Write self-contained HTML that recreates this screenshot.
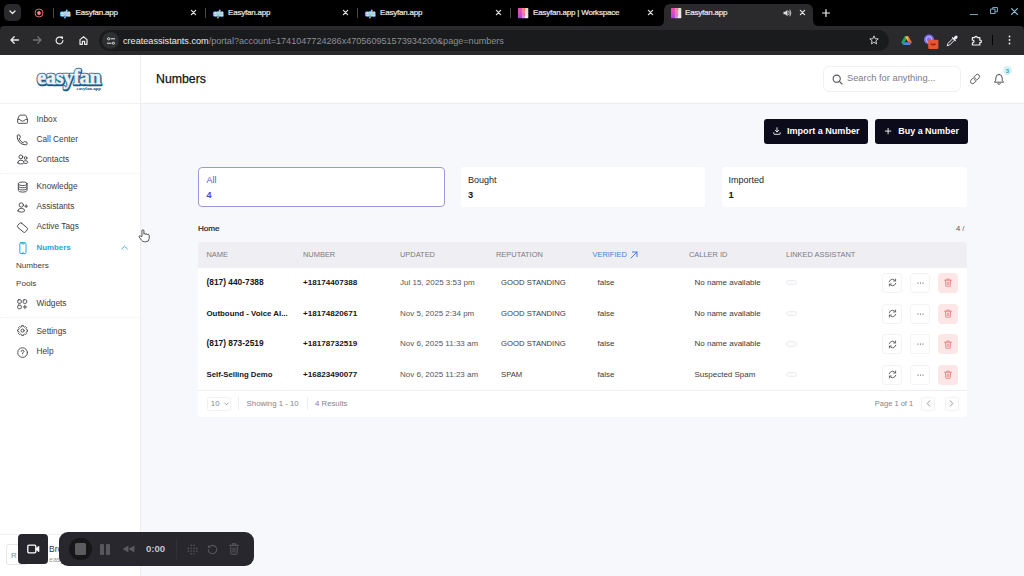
<!DOCTYPE html>
<html><head><meta charset="utf-8"><title>Easyfan.app</title>
<style>
*{box-sizing:border-box;margin:0;padding:0}
html,body{width:1024px;height:576px;overflow:hidden;background:#f7f8fc;font-family:"Liberation Sans",sans-serif;}
body{position:relative}
svg{position:absolute;overflow:visible}
.t{position:absolute;white-space:nowrap;transform:translateY(-50%)}
#tabs{position:absolute;left:0;top:0;width:1024px;height:34px;background:#000}
#toolbar{position:absolute;left:0;top:26px;width:1024px;height:29px;background:#2a2a2d;border-radius:4px 4px 0 0}
#acttab{position:absolute;left:664px;top:4px;width:149px;height:23px;background:#2a2a2d;border-radius:6px 6px 0 0}
#url{position:absolute;left:99px;top:30px;width:790px;height:21px;border-radius:11px;background:#1a1b1d}
.tabt{font-size:8px;color:#ececec;top:11.7px;letter-spacing:-0.2px;-webkit-text-stroke:0.2px #ececec}
.sep{position:absolute;top:8px;width:1px;height:10px;background:#4a4a4a}
#side{position:absolute;left:0;top:55px;width:141px;height:521px;background:#fff;border-right:1px solid #ececf1}
.nav{font-size:8.3px;color:#3c3c43;left:36px}
.dv{position:absolute;left:0;width:140px;height:0;border-top:1px dotted #efeff4}
#head{position:absolute;left:141px;top:55px;width:883px;height:48.5px;background:#fff;border-bottom:1px solid #ececf1}
.card{position:absolute;top:167px;height:40px;background:#fff;border-radius:3px}
.btn{position:absolute;top:119px;height:25px;background:#0b0b1c;border-radius:3px}
.btn .t{color:#fff;font-weight:bold;font-size:9px;top:11.8px}
#tbl{position:absolute;left:198px;top:242px;width:769px;height:174.6px;background:#fff;border-radius:3px;overflow:hidden}
#thead{position:absolute;left:0;top:0;width:100%;height:25.5px;background:#efeff3}
.th{font-size:7.45px;color:#7a7a85;top:11.6px}
.row{position:absolute;left:0;width:100%;height:31px}
.c{font-size:8px;color:#3a3a40;top:14.7px}
.c.b{font-weight:bold;color:#15151a;font-size:8.1px}
.ab{position:absolute;top:5.5px;width:20px;height:20px;border:1px solid #f2f2f7;border-radius:3.5px;background:#fff}
.ab.del{background:#fde6e6;border-color:#fde6e6}
.ft{font-size:7.8px;color:#85858d;top:160.5px}
</style></head><body>

<div id="tabs"></div><div id="acttab"></div><div id="toolbar"></div><div id="url"></div>
<svg style="left:658px;top:20px" width="6" height="6" viewBox="0 0 6 6"><path d="M6 0 V6 H0 Q6 6 6 0 Z" fill="#2a2a2d"/></svg>
<svg style="left:813px;top:20px" width="6" height="6" viewBox="0 0 6 6"><path d="M0 0 V6 H6 Q0 6 0 0 Z" fill="#2a2a2d"/></svg>
<div style="position:absolute;left:4px;top:4px;width:17px;height:17px;border-radius:5px;background:#2a2a2c"></div>
<svg style="left:9px;top:10px" width="7" height="5" viewBox="0 0 7 5"><path d="M1 1 L3.5 3.5 L6 1" fill="none" stroke="#e8e8e8" stroke-width="1.3" stroke-linecap="round" stroke-linejoin="round"/></svg>
<svg style="left:34px;top:8px" width="10" height="10" viewBox="0 0 10 10"><circle cx="5" cy="5" r="4" fill="none" stroke="#e06a66" stroke-width="1"/><circle cx="5" cy="5" r="1.9" fill="#f08a86"/></svg>
<div class="sep" style="left:53px"></div>
<svg style="left:60px;top:7.5px" width="11" height="11" viewBox="0 0 11 11"><g transform="translate(0.5 7.6) scale(1 2.6)" font-family="'Liberation Serif',serif" font-weight="bold" font-size="3px"><text x="0" y="0" fill="#5f9cc4" stroke="#5f9cc4" stroke-width="0.55" stroke-linejoin="round">easyfan</text><text x="0" y="0" fill="#e4f0f8" stroke="#cfe4f2" stroke-width="0.12">easyfan</text></g></svg>
<div class="t tabt" style="left:75.5px">Easyfan.app</div>
<svg style="left:190.5px;top:10.0px" width="5" height="5" viewBox="0 0 5 5"><path d="M0.4 0.4 L4.6 4.6 M4.6 0.4 L0.4 4.6" stroke="#e3e3e3" stroke-width="1.25" stroke-linecap="round"/></svg>
<div class="sep" style="left:205px"></div>
<svg style="left:213px;top:7.5px" width="11" height="11" viewBox="0 0 11 11"><g transform="translate(0.5 7.6) scale(1 2.6)" font-family="'Liberation Serif',serif" font-weight="bold" font-size="3px"><text x="0" y="0" fill="#5f9cc4" stroke="#5f9cc4" stroke-width="0.55" stroke-linejoin="round">easyfan</text><text x="0" y="0" fill="#e4f0f8" stroke="#cfe4f2" stroke-width="0.12">easyfan</text></g></svg>
<div class="t tabt" style="left:228px">Easyfan.app</div>
<svg style="left:342.5px;top:10.0px" width="5" height="5" viewBox="0 0 5 5"><path d="M0.4 0.4 L4.6 4.6 M4.6 0.4 L0.4 4.6" stroke="#e3e3e3" stroke-width="1.25" stroke-linecap="round"/></svg>
<div class="sep" style="left:357px"></div>
<svg style="left:365px;top:7.5px" width="11" height="11" viewBox="0 0 11 11"><g transform="translate(0.5 7.6) scale(1 2.6)" font-family="'Liberation Serif',serif" font-weight="bold" font-size="3px"><text x="0" y="0" fill="#5f9cc4" stroke="#5f9cc4" stroke-width="0.55" stroke-linejoin="round">easyfan</text><text x="0" y="0" fill="#e4f0f8" stroke="#cfe4f2" stroke-width="0.12">easyfan</text></g></svg>
<div class="t tabt" style="left:380px">Easyfan.app</div>
<svg style="left:495.5px;top:10.0px" width="5" height="5" viewBox="0 0 5 5"><path d="M0.4 0.4 L4.6 4.6 M4.6 0.4 L0.4 4.6" stroke="#e3e3e3" stroke-width="1.25" stroke-linecap="round"/></svg>
<div class="sep" style="left:510px"></div>
<svg style="left:517.5px;top:7.7px" width="10.3" height="10.3" viewBox="0 0 9 9"><defs><linearGradient id="ga517" x1="0" y1="0" x2="0" y2="1"><stop offset="0" stop-color="#f24eb2"/><stop offset="0.5" stop-color="#d94ac8"/><stop offset="1" stop-color="#a844dc"/></linearGradient><linearGradient id="gb517" x1="0" y1="0" x2="0" y2="1"><stop offset="0" stop-color="#f28a92"/><stop offset="0.6" stop-color="#e878b8"/><stop offset="1" stop-color="#c89ae8"/></linearGradient><linearGradient id="gc517" x1="0" y1="0" x2="0" y2="1"><stop offset="0" stop-color="#d4e6d4"/><stop offset="0.5" stop-color="#f6d8dc"/><stop offset="1" stop-color="#e8eefc"/></linearGradient></defs><rect x="0" y="0" width="3.6" height="9" rx="0.6" fill="url(#ga517)"/><rect x="3.4" y="0" width="2.8" height="9" fill="url(#gb517)"/><rect x="6" y="0" width="3" height="9" rx="0.6" fill="url(#gc517)"/><rect x="5.4" y="0.8" width="1" height="1" fill="#f0603a"/><rect x="5.2" y="5.6" width="1" height="1" fill="#f06a5a"/></svg>
<div class="t tabt" style="left:533px">Easyfan.app | Workspace</div>
<svg style="left:647.5px;top:10.0px" width="5" height="5" viewBox="0 0 5 5"><path d="M0.4 0.4 L4.6 4.6 M4.6 0.4 L0.4 4.6" stroke="#e3e3e3" stroke-width="1.25" stroke-linecap="round"/></svg>
<svg style="left:670.5px;top:7.7px" width="10.3" height="10.3" viewBox="0 0 9 9"><defs><linearGradient id="ga670" x1="0" y1="0" x2="0" y2="1"><stop offset="0" stop-color="#f24eb2"/><stop offset="0.5" stop-color="#d94ac8"/><stop offset="1" stop-color="#a844dc"/></linearGradient><linearGradient id="gb670" x1="0" y1="0" x2="0" y2="1"><stop offset="0" stop-color="#f28a92"/><stop offset="0.6" stop-color="#e878b8"/><stop offset="1" stop-color="#c89ae8"/></linearGradient><linearGradient id="gc670" x1="0" y1="0" x2="0" y2="1"><stop offset="0" stop-color="#d4e6d4"/><stop offset="0.5" stop-color="#f6d8dc"/><stop offset="1" stop-color="#e8eefc"/></linearGradient></defs><rect x="0" y="0" width="3.6" height="9" rx="0.6" fill="url(#ga670)"/><rect x="3.4" y="0" width="2.8" height="9" fill="url(#gb670)"/><rect x="6" y="0" width="3" height="9" rx="0.6" fill="url(#gc670)"/><rect x="5.4" y="0.8" width="1" height="1" fill="#f0603a"/><rect x="5.2" y="5.6" width="1" height="1" fill="#f06a5a"/></svg>
<div class="t tabt" style="left:685px">Easyfan.app</div>
<svg style="left:783px;top:8.5px" width="9" height="8" viewBox="0 0 9 8"><path d="M0.5 2.8 H2.2 L4.5 0.8 V7.2 L2.2 5.2 H0.5 Z" fill="#dcdcdc"/><path d="M5.8 2.3 Q7 4 5.8 5.7 M7 1 Q9 4 7 7" fill="none" stroke="#dcdcdc" stroke-width="0.9" stroke-linecap="round"/></svg>
<svg style="left:799.5px;top:10.0px" width="5" height="5" viewBox="0 0 5 5"><path d="M0.4 0.4 L4.6 4.6 M4.6 0.4 L0.4 4.6" stroke="#e3e3e3" stroke-width="1.25" stroke-linecap="round"/></svg>
<svg style="left:821.5px;top:8.5px" width="8" height="8" viewBox="0 0 8 8"><path d="M4 0.5 V7.5 M0.5 4 H7.5" stroke="#f0f0f0" stroke-width="1.2" stroke-linecap="round"/></svg>
<div style="position:absolute;left:969.5px;top:13.5px;width:8px;height:1.2px;background:#7aa0b8"></div>
<svg style="left:989.5px;top:7px" width="8" height="7" viewBox="0 0 9 8"><rect x="0.6" y="2.4" width="5" height="5" fill="none" stroke="#7fb0cc" stroke-width="1.1"/><path d="M3 2.4 V0.6 H8.4 V5.4 H5.6" fill="none" stroke="#7fb0cc" stroke-width="1.1"/></svg>
<svg style="left:1010.5px;top:7.5px" width="7" height="7" viewBox="0 0 7 7"><path d="M0.6 0.6 L6.4 6.4 M6.4 0.6 L0.6 6.4" stroke="#8fc4e0" stroke-width="1.2" stroke-linecap="round"/></svg>
<svg style="left:9.5px;top:36px" width="9" height="8" viewBox="0 0 9 8"><path d="M8.5 4 H1.2 M4.2 0.8 L1 4 L4.2 7.2" fill="none" stroke="#ececec" stroke-width="1.3" stroke-linecap="round" stroke-linejoin="round"/></svg>
<svg style="left:32.5px;top:36px" width="9" height="8" viewBox="0 0 9 8"><path d="M0.5 4 H7.8 M4.8 0.8 L8 4 L4.8 7.2" fill="none" stroke="#707174" stroke-width="1.3" stroke-linecap="round" stroke-linejoin="round"/></svg>
<svg style="left:55px;top:35.5px" width="9" height="9" viewBox="0 0 9 9"><path d="M7.9 4.5 A3.4 3.4 0 1 1 6.6 1.8" fill="none" stroke="#ececec" stroke-width="1.2" stroke-linecap="round"/><path d="M5.2 0.6 H8 V3.4 Z" fill="#ececec"/></svg>
<svg style="left:78.5px;top:35.5px" width="9" height="9" viewBox="0 0 9 9"><path d="M1 8.3 V3.6 L4.5 0.8 L8 3.6 V8.3 H5.6 V5.3 H3.4 V8.3 Z" fill="none" stroke="#ececec" stroke-width="1.2" stroke-linejoin="round"/></svg>
<div style="position:absolute;left:102px;top:32px;width:17px;height:17px;border-radius:50%;background:#2e2f31"></div>
<svg style="left:106.5px;top:36.5px" width="8" height="8" viewBox="0 0 8 8"><circle cx="1.6" cy="1.8" r="1.1" fill="none" stroke="#e8e8e8" stroke-width="0.9"/><path d="M4 1.8 H7.6" stroke="#e8e8e8" stroke-width="1" stroke-linecap="round"/><circle cx="6.4" cy="6.2" r="1.1" fill="none" stroke="#e8e8e8" stroke-width="0.9"/><path d="M0.4 6.2 H4" stroke="#e8e8e8" stroke-width="1" stroke-linecap="round"/></svg>
<div class="t" style="left:123px;top:40.5px;font-size:9.15px;color:#ededed">createassistants.com<span style="color:#8e9093;letter-spacing:-0.027px">/portal?account=1741047724286x470560951573934200&amp;page=numbers</span></div>
<svg style="left:869px;top:35px" width="10" height="10" viewBox="0 0 10 10"><path d="M5 0.9 L6.2 3.7 L9.2 3.9 L6.9 5.9 L7.6 8.9 L5 7.3 L2.4 8.9 L3.1 5.9 L0.8 3.9 L3.8 3.7 Z" fill="none" stroke="#e0e0e0" stroke-width="0.9" stroke-linejoin="round"/></svg>
<svg style="left:901px;top:35.5px" width="11" height="9" viewBox="0 0 11 9"><path d="M3.8 0.3 L0.3 6.3 L2 9 L5.5 3 Z" fill="#21a565"/><path d="M3.8 0.3 H7.2 L10.7 6.3 H7.3 Z" fill="#f6c343"/><path d="M2 9 H9 L10.7 6.3 H3.6 Z" fill="#4a86e8"/><path d="M7.2 0.3 L10.7 6.3 L9 9 L7.3 6.3 Z" fill="#e54b3c" opacity=".8"/></svg>
<svg style="left:923px;top:34px" width="16" height="15" viewBox="0 0 16 15"><circle cx="6" cy="5.5" r="5" fill="#7a6cf0"/><circle cx="6" cy="5.5" r="2.8" fill="none" stroke="#c9c2ff" stroke-width="1"/><rect x="5.2" y="5.8" width="10.2" height="9.2" rx="1.2" fill="#ea5533"/><path d="M7.5 10.4 H13 M8.4 9 L10 11.8 M12 9 L10.6 11.8" stroke="#8a2410" stroke-width="0.8"/></svg>
<svg style="left:946px;top:34.5px" width="12" height="12" viewBox="0 0 12 12"><path d="M1.2 10.8 L2 8.4 L7 3.4 L8.6 5 L3.6 10 Z" fill="none" stroke="#f0f0ff" stroke-width="1" stroke-linejoin="round"/><path d="M6.4 2.6 L9.4 5.6 M7.6 3.8 L9.2 1.6 Q10.2 0.8 10.9 1.5 Q11.4 2.2 10.6 3 L8.4 4.6" fill="#f0f0ff" stroke="#f0f0ff" stroke-width="1.1" stroke-linecap="round"/></svg>
<svg style="left:970.5px;top:35px" width="11" height="11" viewBox="0 0 11 11"><path d="M1.4 2.6 H3.8 Q3.8 1.4 5 1.4 Q6.2 1.4 6.2 2.6 H8.8 V5.2 Q10.4 5 10.4 6.4 Q10.4 7.8 8.8 7.6 V10 H1.4 V7.8 Q3 7.8 3 6.4 Q3 5 1.4 5.2 Z" fill="none" stroke="#efefef" stroke-width="1.2" stroke-linejoin="round"/></svg>
<div style="position:absolute;left:992px;top:35px;width:1px;height:10px;background:#050505"></div>
<svg style="left:1008px;top:35px" width="3" height="10" viewBox="0 0 3 10"><circle cx="1.5" cy="1.5" r="0.9" fill="#ececec"/><circle cx="1.5" cy="5" r="0.9" fill="#ececec"/><circle cx="1.5" cy="8.5" r="0.9" fill="#ececec"/></svg><div id="side"></div><div id="head"></div><div style="position:absolute;left:0;top:102.5px;width:141px;height:1px;background:#f2f2f6"></div>
<svg style="left:34px;top:64.8px" width="74" height="30" viewBox="0 0 74 30">
<g font-family="'Liberation Serif',serif" font-weight="bold" font-size="20.5" letter-spacing="-0.36">
<text x="3.6" y="20.4" fill="#1b4f78" stroke="#1b4f78" stroke-width="2.6" stroke-linejoin="round">easyfan</text>
<text x="3" y="19.3" fill="#2a6c98" stroke="#2e74a2" stroke-width="2.4" stroke-linejoin="round">easyfan</text>
<text x="3" y="19.3" fill="#eef2f5" stroke="#eef2f5" stroke-width="0.5">easyfan</text>
</g>
<text x="42.5" y="24.8" font-family="'Liberation Serif',serif" font-weight="bold" font-size="4.8" fill="#2b4a66">easyfan.app</text>
</svg>
<svg style="left:16.5px;top:113.8px" width="11.2" height="11.2" viewBox="0 0 12 12"><path d="M0.8 5.6 L2.4 1.7 Q2.6 1.2 3.2 1.2 H8.8 Q9.4 1.2 9.6 1.7 L11.2 5.6 V9.2 Q11.2 10 10.4 10 H1.6 Q0.8 10 0.8 9.2 Z M0.8 5.8 H3.2 Q3.6 7.6 6 7.6 Q8.4 7.6 8.8 5.8 H11.2" fill="none" stroke="#48484f" stroke-width="1" stroke-linecap="round" stroke-linejoin="round"/></svg>
<div class="t nav" style="left:36.5px;top:119.2px;">Inbox</div>
<svg style="left:15.6px;top:133.5px" width="12" height="12" viewBox="0 0 12 12"><path d="M1.2 1.6 Q1.2 0.9 1.9 0.9 H3.2 Q3.7 0.9 3.8 1.4 L4.3 3.4 Q4.4 3.8 4 4.1 L3.1 4.8 Q4.3 7.4 7.1 8.8 L7.8 7.9 Q8.1 7.5 8.6 7.6 L10.6 8.1 Q11.1 8.2 11.1 8.8 V10 Q11.1 10.8 10.3 10.8 H9.6 Q5.6 10.8 3.2 8 Q1.2 5.6 1.2 2.4 Z" fill="none" stroke="#48484f" stroke-width="1" stroke-linecap="round" stroke-linejoin="round"/></svg>
<div class="t nav" style="left:36.5px;top:138.6px;">Call Center</div>
<svg style="left:16.5px;top:154.2px" width="11.5" height="11.5" viewBox="0 0 12 12"><circle cx="4" cy="3" r="2" fill="none" stroke="#48484f" stroke-width="1" stroke-linecap="round" stroke-linejoin="round"/><path d="M0.8 9.2 Q0.8 6.4 4 6.4 Q7.2 6.4 7.2 9.2 Q7.2 10.4 4 10.4 Q0.8 10.4 0.8 9.2 Z" fill="none" stroke="#48484f" stroke-width="1" stroke-linecap="round" stroke-linejoin="round"/><circle cx="9" cy="4.2" r="1.4" fill="none" stroke="#48484f" stroke-width="1" stroke-linecap="round" stroke-linejoin="round"/><path d="M8 9.9 Q11.2 10.2 11.2 8.8 Q11.2 7 9 7 Q8.2 7 7.6 7.3" fill="none" stroke="#48484f" stroke-width="1" stroke-linecap="round" stroke-linejoin="round"/></svg>
<div class="t nav" style="left:36.5px;top:158.9px;">Contacts</div>
<div class="dv" style="top:173px"></div>
<svg style="left:16.7px;top:181px" width="11.4" height="12" viewBox="0 0 12 12"><ellipse cx="6" cy="2.6" rx="4.6" ry="1.9" fill="none" stroke="#48484f" stroke-width="1" stroke-linecap="round" stroke-linejoin="round"/><path d="M1.4 2.6 V9.6 Q1.4 11.4 6 11.4 Q10.6 11.4 10.6 9.6 V2.6 M1.4 5 Q1.4 6.8 6 6.8 Q10.6 6.8 10.6 5 M1.4 7.3 Q1.4 9.1 6 9.1 Q10.6 9.1 10.6 7.3" fill="none" stroke="#48484f" stroke-width="1" stroke-linecap="round" stroke-linejoin="round"/></svg>
<div class="t nav" style="left:36.5px;top:185.9px;">Knowledge</div>
<svg style="left:16.5px;top:201.8px" width="11.2" height="11.2" viewBox="0 0 12 12"><circle cx="4.6" cy="3.2" r="2.3" fill="none" stroke="#48484f" stroke-width="1" stroke-linecap="round" stroke-linejoin="round"/><path d="M1 9.6 Q1 6.8 4.6 6.8 Q8.2 6.8 8.2 9.6 Q8.2 10.8 4.6 10.8 Q1 10.8 1 9.6 Z" fill="none" stroke="#48484f" stroke-width="1" stroke-linecap="round" stroke-linejoin="round"/><path d="M9.8 3 V6 M8.3 4.5 H11.3" fill="none" stroke="#48484f" stroke-width="1" stroke-linecap="round" stroke-linejoin="round"/></svg>
<div class="t nav" style="left:36.5px;top:205.7px;">Assistants</div>
<svg style="left:16.8px;top:222px" width="11" height="11" viewBox="0 0 12 12"><g transform="rotate(40 6 6)"><rect x="0.6" y="3" width="11" height="6.2" rx="1.8" fill="none" stroke="#48484f" stroke-width="1" stroke-linecap="round" stroke-linejoin="round"/></g></svg>
<div class="t nav" style="left:36.5px;top:225.9px;">Active Tags</div>
<svg style="left:16.5px;top:241.5px" width="12" height="12" viewBox="0 0 12 12"><rect x="2.8" y="0.6" width="6.2" height="11" rx="1.2" fill="none" stroke="#2aa7de" stroke-width="1" stroke-linecap="round" stroke-linejoin="round"/><path d="M4.8 1.2 V1.9 H7.2 V1.2 M5 11.4 L6 10.6 L7 11.4" fill="none" stroke="#2aa7de" stroke-width="1" stroke-linecap="round" stroke-linejoin="round"/></svg>
<div class="t nav" style="left:36.5px;top:247.0px;color:#25a5dd;font-weight:bold;font-size:7.9px">Numbers</div>
<svg style="left:121.4px;top:245.4px" width="7" height="5" viewBox="0 0 7 5"><path d="M0.6 4 L3.5 1.2 L6.4 4" fill="none" stroke="#4ab3e2" stroke-width="1" stroke-linecap="round" stroke-linejoin="round"/></svg>
<div class="t nav" style="left:16px;top:265.0px;font-size:8.1px">Numbers</div>
<div class="t nav" style="left:16px;top:283.0px;font-size:8.1px">Pools</div>
<svg style="left:16.5px;top:299px" width="11.2" height="11.2" viewBox="0 0 12 12"><rect x="0.8" y="0.8" width="3.8" height="3.8" rx="1" fill="none" stroke="#48484f" stroke-width="1" stroke-linecap="round" stroke-linejoin="round"/><rect x="6.6" y="0.8" width="3.8" height="3.8" rx="1" fill="none" stroke="#48484f" stroke-width="1" stroke-linecap="round" stroke-linejoin="round"/><rect x="0.8" y="6.6" width="3.8" height="3.8" rx="1" fill="none" stroke="#48484f" stroke-width="1" stroke-linecap="round" stroke-linejoin="round"/><path d="M8.5 6.6 V10.4 M6.6 8.5 H10.4" fill="none" stroke="#48484f" stroke-width="1" stroke-linecap="round" stroke-linejoin="round"/></svg>
<div class="t nav" style="left:36.5px;top:303.0px;">Widgets</div>
<div class="dv" style="top:317px"></div>
<svg style="left:16.5px;top:325.3px" width="11.2" height="11.2" viewBox="0 0 12 12"><path d="M5.16 0.67 L6.84 0.67 L7.07 1.84 L8.19 2.30 L9.17 1.63 L10.37 2.83 L9.70 3.81 L10.16 4.93 L11.33 5.16 L11.33 6.84 L10.16 7.07 L9.70 8.19 L10.37 9.17 L9.17 10.37 L8.19 9.70 L7.07 10.16 L6.84 11.33 L5.16 11.33 L4.93 10.16 L3.81 9.70 L2.83 10.37 L1.63 9.17 L2.30 8.19 L1.84 7.07 L0.67 6.84 L0.67 5.16 L1.84 4.93 L2.30 3.81 L1.63 2.83 L2.83 1.63 L3.81 2.30 L4.93 1.84 Z" fill="none" stroke="#48484f" stroke-width="1" stroke-linecap="round" stroke-linejoin="round"/><circle cx="6" cy="6" r="1.7" fill="none" stroke="#48484f" stroke-width="1" stroke-linecap="round" stroke-linejoin="round"/></svg>
<div class="t nav" style="left:36.5px;top:331.2px;">Settings</div>
<svg style="left:16.5px;top:346.5px" width="11.2" height="11.2" viewBox="0 0 12 12"><circle cx="6" cy="6" r="5.2" fill="none" stroke="#48484f" stroke-width="1" stroke-linecap="round" stroke-linejoin="round"/><path d="M4.5 4.8 Q4.5 3.4 6 3.4 Q7.5 3.4 7.5 4.7 Q7.5 5.6 6 6.3 V7.1" fill="none" stroke="#48484f" stroke-width="1" stroke-linecap="round" stroke-linejoin="round"/><circle cx="6" cy="8.7" r="0.5" fill="#48484f"/></svg>
<div class="t nav" style="left:36.5px;top:351.2px;">Help</div>
<div style="position:absolute;left:0;top:534px;width:140px;height:1px;background:#f0f0f4"></div>
<div style="position:absolute;left:6px;top:544px;width:22px;height:21px;border:1px solid #e6e6ec;border-radius:3px;background:#fff"></div>
<div class="t" style="left:11px;top:554.5px;font-size:8px;color:#888">R</div>
<div class="t" style="left:49px;top:549px;font-size:8.5px;color:#333">Bro</div>
<div class="t" style="left:49px;top:558.5px;font-size:7px;color:#999">easy</div>
<div class="t" style="left:156px;top:78.5px;font-size:12.3px;color:#121217;-webkit-text-stroke:0.25px #121217">Numbers</div>
<div style="position:absolute;left:823px;top:66px;width:138px;height:25.5px;border:1px solid #f0f0f5;border-radius:6px;background:#fff"></div>
<svg style="left:831.5px;top:73.5px" width="11" height="11" viewBox="0 0 11 11"><circle cx="4.7" cy="4.7" r="3.6" fill="none" stroke="#55555c" stroke-width="1.1"/><path d="M7.4 7.4 L10 10" stroke="#55555c" stroke-width="1.1" stroke-linecap="round"/></svg>
<div class="t" style="left:847px;top:77.6px;font-size:9.3px;color:#7b7b84">Search for anything...</div>
<svg style="left:969px;top:73px" width="12" height="12" viewBox="0 0 12 12"><g fill="none" stroke="#55555c" stroke-width="1" stroke-linecap="round"><path d="M5.2 3.6 L6.9 1.9 Q8.4 0.6 9.9 1.9 Q11.3 3.4 10 4.9 L8.2 6.7 Q6.8 7.9 5.4 6.8"/><path d="M6.8 8.4 L5.1 10.1 Q3.6 11.4 2.1 10.1 Q0.7 8.6 2 7.1 L3.8 5.3 Q5.2 4.1 6.6 5.2"/></g></svg>
<svg style="left:992.5px;top:73px" width="12" height="13" viewBox="0 0 12 13"><g fill="none" stroke="#55555c" stroke-width="1" stroke-linecap="round" stroke-linejoin="round"><path d="M6 1.4 Q9.2 1.4 9.2 5 V7.2 L10.6 9.2 H1.4 L2.8 7.2 V5 Q2.8 1.4 6 1.4 Z"/><path d="M4.6 10.8 Q6 12 7.4 10.8"/></g></svg>
<div style="position:absolute;left:1003px;top:66px;width:9px;height:9px;border-radius:50%;background:#d4f1f5"></div>
<div class="t" style="left:1005.7px;top:70.5px;font-size:6px;color:#2aa3b8;font-weight:bold">3</div><div class="btn" style="left:764px;width:104px"><svg style="left:9.4px;top:8.4px" width="8" height="8" viewBox="0 0 9 9"><path d="M4.5 0.8 V5.4 M2.6 3.7 L4.5 5.6 L6.4 3.7 M0.9 6.4 V7.6 Q0.9 8.2 1.5 8.2 H7.5 Q8.1 8.2 8.1 7.6 V6.4" fill="none" stroke="#fff" stroke-width="1" stroke-linecap="round" stroke-linejoin="round"/></svg><div class="t" style="left:23px;font-size:9.07px">Import a Number</div></div>
<div class="btn" style="left:875px;width:92.5px"><svg style="left:10.3px;top:9.3px" width="6.2" height="6.2" viewBox="0 0 7 7"><path d="M3.5 0.4 V6.6 M0.4 3.5 H6.6" stroke="#fff" stroke-width="1" stroke-linecap="round"/></svg><div class="t" style="left:23.3px;font-size:8.95px">Buy a Number</div></div>
<div class="card" style="left:197.5px;width:247px;border:1px solid #9a9ad6;border-radius:4px"><div class="t" style="left:8px;top:11.5px;font-size:9px;color:#5a55c8">All</div><div class="t" style="left:8px;top:27px;font-size:9px;font-weight:bold;color:#4a44c0">4</div></div>
<div class="card" style="left:461px;width:244px"><div class="t" style="left:7px;top:12.5px;font-size:9px;color:#26262c">Bought</div><div class="t" style="left:7px;top:28px;font-size:9.3px;font-weight:bold;color:#15151a">3</div></div>
<div class="card" style="left:721.5px;width:245.5px"><div class="t" style="left:7px;top:12.5px;font-size:9px;color:#26262c">Imported</div><div class="t" style="left:7px;top:28px;font-size:9.3px;font-weight:bold;color:#15151a">1</div></div>
<div class="t" style="left:198px;top:227.6px;font-size:8.1px;color:#1c1c22;-webkit-text-stroke:0.2px #1c1c22">Home</div>
<div class="t" style="left:956px;top:227.8px;font-size:7.6px;color:#55555c">4 /</div>
<div id="tbl"><div id="thead">
<div class="t th" style="left:8.5px">NAME</div>
<div class="t th" style="left:105px">NUMBER</div>
<div class="t th" style="left:202px">UPDATED</div>
<div class="t th" style="left:298px">REPUTATION</div>
<div class="t th" style="left:394.5px;color:#3f7fd6">VERIFIED</div>
<svg style="left:431.5px;top:8.5px" width="8" height="8" viewBox="0 0 8 8"><path d="M1 7 L7 1 M2.4 1 H7 V5.6" fill="none" stroke="#3f7fd6" stroke-width="1" stroke-linecap="round" stroke-linejoin="round"/></svg>
<div class="t th" style="left:491px">CALLER ID</div>
<div class="t th" style="left:588px">LINKED ASSISTANT</div>
</div>
<div class="row" style="top:25.40px">
<div class="t c b" style="left:8.5px;font-size:8.36px">(817) 440-7388</div>
<div class="t c b" style="left:105px">+18174407388</div>
<div class="t c" style="left:202px;color:#55555c">Jul 15, 2025 3:53 pm</div>
<div class="t c" style="left:303px;font-size:7.7px">GOOD STANDING</div>
<div class="t c" style="left:399.5px">false</div>
<div class="t c" style="left:496.5px">No name available</div>
<div style="position:absolute;left:588px;top:12.5px;width:11px;height:5.5px;border:1px solid #ececf0;border-radius:3px;background:#fbfbfd"></div>
<div class="ab" style="left:684px"><svg style="left:4.5px;top:4.5px" width="9" height="9" viewBox="0 0 9 9"><g fill="none" stroke="#4a4a52" stroke-width="0.8" stroke-linecap="round" stroke-linejoin="round"><path d="M1.2 3.8 Q2 1.2 4.5 1.2 Q6.4 1.2 7.4 2.8 M7.6 1 V3 H5.6"/><path d="M7.8 5.2 Q7 7.8 4.5 7.8 Q2.6 7.8 1.6 6.2 M1.4 8 V6 H3.4"/></g></svg></div>
<div class="ab" style="left:712.4px"><svg style="left:5.5px;top:8px" width="7" height="2" viewBox="0 0 7 2"><circle cx="1" cy="1" r="0.6" fill="#3c3c43"/><circle cx="3.5" cy="1" r="0.6" fill="#3c3c43"/><circle cx="6" cy="1" r="0.6" fill="#3c3c43"/></svg></div>
<div class="ab del" style="left:740px"><svg style="left:5px;top:4.5px" width="8" height="9" viewBox="0 0 8 9"><g fill="none" stroke="#e87f7f" stroke-width="0.85" stroke-linecap="round" stroke-linejoin="round"><path d="M0.6 2.2 H7.4 M2.8 2.2 V1 H5.2 V2.2 M1.4 2.2 L1.8 8.2 H6.2 L6.6 2.2 M3.2 4 V6.6 M4.8 4 V6.6"/></g></svg></div>
</div>
<div class="row" style="top:56.05px">
<div class="t c b" style="left:8.5px;font-size:7.86px">Outbound - Voice AI...</div>
<div class="t c b" style="left:105px">+18174820671</div>
<div class="t c" style="left:202px;color:#55555c">Nov 5, 2025 2:34 pm</div>
<div class="t c" style="left:303px;font-size:7.7px">GOOD STANDING</div>
<div class="t c" style="left:399.5px">false</div>
<div class="t c" style="left:496.5px">No name available</div>
<div style="position:absolute;left:588px;top:12.5px;width:11px;height:5.5px;border:1px solid #ececf0;border-radius:3px;background:#fbfbfd"></div>
<div class="ab" style="left:684px"><svg style="left:4.5px;top:4.5px" width="9" height="9" viewBox="0 0 9 9"><g fill="none" stroke="#4a4a52" stroke-width="0.8" stroke-linecap="round" stroke-linejoin="round"><path d="M1.2 3.8 Q2 1.2 4.5 1.2 Q6.4 1.2 7.4 2.8 M7.6 1 V3 H5.6"/><path d="M7.8 5.2 Q7 7.8 4.5 7.8 Q2.6 7.8 1.6 6.2 M1.4 8 V6 H3.4"/></g></svg></div>
<div class="ab" style="left:712.4px"><svg style="left:5.5px;top:8px" width="7" height="2" viewBox="0 0 7 2"><circle cx="1" cy="1" r="0.6" fill="#3c3c43"/><circle cx="3.5" cy="1" r="0.6" fill="#3c3c43"/><circle cx="6" cy="1" r="0.6" fill="#3c3c43"/></svg></div>
<div class="ab del" style="left:740px"><svg style="left:5px;top:4.5px" width="8" height="9" viewBox="0 0 8 9"><g fill="none" stroke="#e87f7f" stroke-width="0.85" stroke-linecap="round" stroke-linejoin="round"><path d="M0.6 2.2 H7.4 M2.8 2.2 V1 H5.2 V2.2 M1.4 2.2 L1.8 8.2 H6.2 L6.6 2.2 M3.2 4 V6.6 M4.8 4 V6.6"/></g></svg></div>
</div>
<div class="row" style="top:86.70px">
<div class="t c b" style="left:8.5px;font-size:8.36px">(817) 873-2519</div>
<div class="t c b" style="left:105px">+18178732519</div>
<div class="t c" style="left:202px;color:#55555c">Nov 6, 2025 11:33 am</div>
<div class="t c" style="left:303px;font-size:7.7px">GOOD STANDING</div>
<div class="t c" style="left:399.5px">false</div>
<div class="t c" style="left:496.5px">No name available</div>
<div style="position:absolute;left:588px;top:12.5px;width:11px;height:5.5px;border:1px solid #ececf0;border-radius:3px;background:#fbfbfd"></div>
<div class="ab" style="left:684px"><svg style="left:4.5px;top:4.5px" width="9" height="9" viewBox="0 0 9 9"><g fill="none" stroke="#4a4a52" stroke-width="0.8" stroke-linecap="round" stroke-linejoin="round"><path d="M1.2 3.8 Q2 1.2 4.5 1.2 Q6.4 1.2 7.4 2.8 M7.6 1 V3 H5.6"/><path d="M7.8 5.2 Q7 7.8 4.5 7.8 Q2.6 7.8 1.6 6.2 M1.4 8 V6 H3.4"/></g></svg></div>
<div class="ab" style="left:712.4px"><svg style="left:5.5px;top:8px" width="7" height="2" viewBox="0 0 7 2"><circle cx="1" cy="1" r="0.6" fill="#3c3c43"/><circle cx="3.5" cy="1" r="0.6" fill="#3c3c43"/><circle cx="6" cy="1" r="0.6" fill="#3c3c43"/></svg></div>
<div class="ab del" style="left:740px"><svg style="left:5px;top:4.5px" width="8" height="9" viewBox="0 0 8 9"><g fill="none" stroke="#e87f7f" stroke-width="0.85" stroke-linecap="round" stroke-linejoin="round"><path d="M0.6 2.2 H7.4 M2.8 2.2 V1 H5.2 V2.2 M1.4 2.2 L1.8 8.2 H6.2 L6.6 2.2 M3.2 4 V6.6 M4.8 4 V6.6"/></g></svg></div>
</div>
<div class="row" style="top:117.35px">
<div class="t c b" style="left:8.5px;font-size:7.76px">Self-Selling Demo</div>
<div class="t c b" style="left:105px">+16823490077</div>
<div class="t c" style="left:202px;color:#55555c">Nov 6, 2025 11:23 am</div>
<div class="t c" style="left:303px;font-size:7.7px">SPAM</div>
<div class="t c" style="left:399.5px">false</div>
<div class="t c" style="left:496.5px">Suspected Spam</div>
<div style="position:absolute;left:588px;top:12.5px;width:11px;height:5.5px;border:1px solid #ececf0;border-radius:3px;background:#fbfbfd"></div>
<div class="ab" style="left:684px"><svg style="left:4.5px;top:4.5px" width="9" height="9" viewBox="0 0 9 9"><g fill="none" stroke="#4a4a52" stroke-width="0.8" stroke-linecap="round" stroke-linejoin="round"><path d="M1.2 3.8 Q2 1.2 4.5 1.2 Q6.4 1.2 7.4 2.8 M7.6 1 V3 H5.6"/><path d="M7.8 5.2 Q7 7.8 4.5 7.8 Q2.6 7.8 1.6 6.2 M1.4 8 V6 H3.4"/></g></svg></div>
<div class="ab" style="left:712.4px"><svg style="left:5.5px;top:8px" width="7" height="2" viewBox="0 0 7 2"><circle cx="1" cy="1" r="0.6" fill="#3c3c43"/><circle cx="3.5" cy="1" r="0.6" fill="#3c3c43"/><circle cx="6" cy="1" r="0.6" fill="#3c3c43"/></svg></div>
<div class="ab del" style="left:740px"><svg style="left:5px;top:4.5px" width="8" height="9" viewBox="0 0 8 9"><g fill="none" stroke="#e87f7f" stroke-width="0.85" stroke-linecap="round" stroke-linejoin="round"><path d="M0.6 2.2 H7.4 M2.8 2.2 V1 H5.2 V2.2 M1.4 2.2 L1.8 8.2 H6.2 L6.6 2.2 M3.2 4 V6.6 M4.8 4 V6.6"/></g></svg></div>
</div>
<div style="position:absolute;left:0;top:148px;width:100%;height:1px;background:#efeff3"></div>
<div style="position:absolute;left:8.5px;top:154.5px;width:24px;height:14px;border:1px solid #f0f0f5;border-radius:2.5px"></div>
<div class="t ft" style="left:12.8px">10</div>
<svg style="left:26px;top:160px" width="5" height="4" viewBox="0 0 5 4"><path d="M0.8 1 L2.5 2.8 L4.2 1" fill="none" stroke="#888" stroke-width="0.8" stroke-linecap="round" stroke-linejoin="round"/></svg>
<div style="position:absolute;left:40px;top:155px;width:1px;height:13px;background:#ededf2"></div>
<div class="t ft" style="left:48.6px">Showing 1 - 10</div>
<div style="position:absolute;left:108.5px;top:155px;width:1px;height:13px;background:#ededf2"></div>
<div class="t ft" style="left:117px">4 Results</div>
<div class="t ft" style="left:676.8px;font-size:7.5px">Page 1 of 1</div>
<div style="position:absolute;left:723px;top:154.5px;width:14px;height:14px;border:1px solid #f0f0f5;border-radius:2.5px"><svg style="left:3.5px;top:2.5px" width="5" height="7" viewBox="0 0 5 7"><path d="M3.8 0.8 L1.2 3.5 L3.8 6.2" fill="none" stroke="#88888f" stroke-width="0.9" stroke-linecap="round" stroke-linejoin="round"/></svg></div>
<div style="position:absolute;left:746.5px;top:154.5px;width:14px;height:14px;border:1px solid #f0f0f5;border-radius:2.5px"><svg style="left:3.5px;top:2.5px" width="5" height="7" viewBox="0 0 5 7"><path d="M1.2 0.8 L3.8 3.5 L1.2 6.2" fill="none" stroke="#88888f" stroke-width="0.9" stroke-linecap="round" stroke-linejoin="round"/></svg></div>
</div>
<svg style="left:137.6px;top:229px" width="13.2" height="14" viewBox="0 0 12 14" preserveAspectRatio="none"><path d="M3.6 7.6 V1.8 Q3.6 0.8 4.5 0.8 Q5.4 0.8 5.4 1.8 V5.2 Q5.4 4.6 6.2 4.6 Q7 4.6 7 5.4 Q7 4.9 7.8 4.9 Q8.6 4.9 8.6 5.8 Q8.6 5.3 9.4 5.4 Q10.2 5.5 10.2 6.4 V9.4 Q10.2 12.8 7 12.8 H6 Q4.2 12.8 3.2 11.2 L1 8 Q0.6 7.2 1.4 6.9 Q2.2 6.7 2.8 7.5 Z" fill="#fff" stroke="#333" stroke-width="0.8" stroke-linejoin="round"/></svg>
<div style="position:absolute;left:18px;top:534px;width:30px;height:30px;border-radius:4px;background:#26262c"></div>
<svg style="left:26.5px;top:543.5px" width="13" height="10" viewBox="0 0 13 10"><rect x="0.8" y="1.2" width="8" height="7.6" rx="1.2" fill="none" stroke="#fff" stroke-width="1.3"/><path d="M9.2 4 L12 2.2 V7.8 L9.2 6 Z" fill="#fff" stroke="#fff" stroke-width="0.6" stroke-linejoin="round"/></svg>
<div style="position:absolute;left:58.7px;top:532.2px;width:195.5px;height:33.4px;border-radius:9px;background:#27272d"></div>
<div style="position:absolute;left:69.4px;top:537.8px;width:22.2px;height:22.2px;border-radius:50%;background:#17171a"></div>
<div style="position:absolute;left:74.8px;top:543.2px;width:11.6px;height:11.6px;border-radius:1.5px;background:#5b5b60"></div>
<div style="position:absolute;left:100px;top:543.5px;width:3.5px;height:11px;border-radius:1px;background:#57575d"></div>
<div style="position:absolute;left:106px;top:543.5px;width:3.5px;height:11px;border-radius:1px;background:#57575d"></div>
<svg style="left:122px;top:545px" width="13" height="8" viewBox="0 0 13 8"><path d="M6.4 0.6 V7.4 L0.6 4 Z M12.4 0.6 V7.4 L6.6 4 Z" fill="#5a5a60"/></svg>
<div class="t" style="left:146px;top:548px;font-size:9.6px;font-weight:bold;color:#c4c4ca">0:00</div>
<div style="position:absolute;left:176px;top:539px;width:1px;height:20px;background:#303036"></div>
<svg style="left:186.5px;top:543.5px" width="11" height="11" viewBox="0 0 11 11"><rect x="3.4" y="0.6" width="1.5" height="1.5" rx="0.5" fill="#55555b"/><rect x="6.2" y="0.6" width="1.5" height="1.5" rx="0.5" fill="#55555b"/><rect x="0.6" y="3.4" width="1.5" height="1.5" rx="0.5" fill="#55555b"/><rect x="3.4" y="3.4" width="1.5" height="1.5" rx="0.5" fill="#55555b"/><rect x="6.2" y="3.4" width="1.5" height="1.5" rx="0.5" fill="#55555b"/><rect x="9.0" y="3.4" width="1.5" height="1.5" rx="0.5" fill="#55555b"/><rect x="0.6" y="6.2" width="1.5" height="1.5" rx="0.5" fill="#55555b"/><rect x="3.4" y="6.2" width="1.5" height="1.5" rx="0.5" fill="#55555b"/><rect x="6.2" y="6.2" width="1.5" height="1.5" rx="0.5" fill="#55555b"/><rect x="9.0" y="6.2" width="1.5" height="1.5" rx="0.5" fill="#55555b"/><rect x="3.4" y="9.0" width="1.5" height="1.5" rx="0.5" fill="#55555b"/><rect x="6.2" y="9.0" width="1.5" height="1.5" rx="0.5" fill="#55555b"/></svg>
<svg style="left:207px;top:543.5px" width="11" height="11" viewBox="0 0 11 11"><path d="M2.2 3 A4.2 4.2 0 1 1 1.3 5.5" fill="none" stroke="#55555b" stroke-width="1.1" stroke-linecap="round"/><path d="M0.8 1 L1.2 4 L4 3.4 Z" fill="#55555b"/></svg>
<svg style="left:228.5px;top:543px" width="10" height="12" viewBox="0 0 10 12"><path d="M0.6 2.4 H9.4 M3.4 2.2 V0.8 H6.6 V2.2" fill="none" stroke="#55555b" stroke-width="1.1" stroke-linecap="round"/><path d="M1.6 3.4 L2 10.6 Q2 11.2 2.6 11.2 H7.4 Q8 11.2 8 10.6 L8.4 3.4" fill="none" stroke="#55555b" stroke-width="1.1"/><path d="M4 4.6 V9.4 M6 4.6 V9.4" stroke="#55555b" stroke-width="1.1"/></svg>
</body></html>
